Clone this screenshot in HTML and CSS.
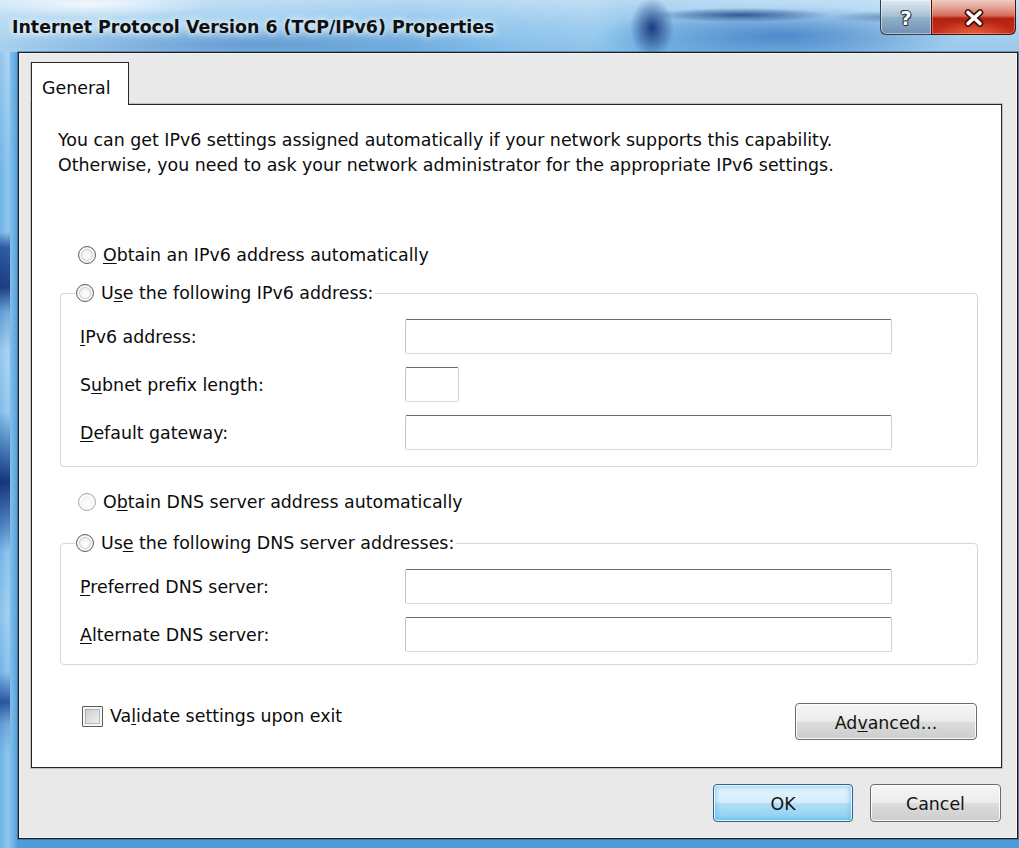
FILE: index.html
```html
<!DOCTYPE html>
<html lang="en">
<head>
<meta charset="utf-8">
<title>Internet Protocol Version 6 (TCP/IPv6) Properties</title>
<link rel="stylesheet" href="styles.css">
</head>
<body>
<div class="window">
  <header class="titlebar">
    <h1 class="title">Internet Protocol Version 6 (TCP/IPv6) Properties</h1>
    <div class="caption">
      <button class="cap-btn help" type="button"><span class="help-glyph">?</span></button>
      <button class="cap-btn close" type="button">
        <svg width="22" height="18" viewBox="0 0 22 18" aria-hidden="true">
          <path d="M5 3.5 L17 14.5 M17 3.5 L5 14.5" stroke="#3a0b06" stroke-width="6.5" stroke-linecap="round" fill="none"/>
          <path d="M5 3.5 L17 14.5 M17 3.5 L5 14.5" stroke="#ffffff" stroke-width="3.6" stroke-linecap="round" fill="none"/>
        </svg>
      </button>
    </div>
  </header>

  <div class="frame">
    <div class="client">
      <div class="tabs">
        <div class="tab">General</div>
      </div>

      <section class="panel">
        <p class="intro">You can get IPv6 settings assigned automatically if your network supports this capability.<br>Otherwise, you need to ask your network administrator for the appropriate IPv6 settings.</p>

        <div class="option lead">
          <span class="radio"></span>
          <span><u>O</u>btain an IPv6 address automatically</span>
        </div>

        <fieldset class="group">
          <legend class="option">
            <span class="radio"></span>
            <span>U<u>s</u>e the following IPv6 address:</span>
          </legend>
          <div class="fields">
            <span class="field-label"><u>I</u>Pv6 address:</span>
            <span class="input"></span>
            <span class="field-label">S<u>u</u>bnet prefix length:</span>
            <span class="input short"></span>
            <span class="field-label"><u>D</u>efault gateway:</span>
            <span class="input"></span>
          </div>
        </fieldset>

        <div class="option dns-auto">
          <span class="radio disabled"></span>
          <span>O<u>b</u>tain DNS server address automatically</span>
        </div>

        <fieldset class="group dns">
          <legend class="option">
            <span class="radio"></span>
            <span>Us<u>e</u> the following DNS server addresses:</span>
          </legend>
          <div class="fields">
            <span class="field-label"><u>P</u>referred DNS server:</span>
            <span class="input"></span>
            <span class="field-label"><u>A</u>lternate DNS server:</span>
            <span class="input"></span>
          </div>
        </fieldset>

        <div class="panel-foot">
          <div class="check">
            <span class="box"></span>
            <span>Va<u>l</u>idate settings upon exit</span>
          </div>
          <button class="btn advanced" type="button">Ad<u>v</u>anced...</button>
        </div>
      </section>

      <div class="dialog-buttons">
        <button class="btn ok default" type="button">OK</button>
        <button class="btn cancel" type="button">Cancel</button>
      </div>
    </div>
  </div>
</div>
</body>
</html>
```

FILE: styles.css
```css
* { box-sizing: border-box; }

html, body {
  margin: 0;
  padding: 0;
}

body {
  width: 1019px;
  height: 848px;
  overflow: hidden;
  font-family: "DejaVu Sans", "DejaVu Sans Condensed", sans-serif;
  font-size: 17.4px;
  letter-spacing: 0;
  color: #0c0c0c;
  background: #6fb2e4;
}

u { text-decoration: underline; text-underline-offset: 2px; text-decoration-thickness: 1px; }

/* ---------- glass window frame ---------- */
.window {
  width: 1019px;
  height: 848px;
  display: flex;
  flex-direction: column;
  background:
    linear-gradient(180deg, #7cbce9 0%, #63ace2 60%, #5aa6e0 100%);
}

.titlebar {
  height: 52px;
  flex: none;
  display: flex;
  align-items: flex-start;
  padding: 0 3px 0 12px;
  background:
    radial-gradient(ellipse 22px 30px at 652px 28px, rgba(10, 40, 110, 0.85), rgba(10, 40, 110, 0) 100%),
    radial-gradient(ellipse 90px 7px at 740px 15px, rgba(20, 55, 120, 0.75), rgba(20, 55, 120, 0) 100%),
    radial-gradient(ellipse 60px 6px at 890px 17px, rgba(40, 80, 140, 0.45), rgba(40, 80, 140, 0) 100%),
    radial-gradient(ellipse 180px 30px at 780px 36px, rgba(30, 95, 180, 0.6), rgba(30, 95, 180, 0) 100%),
    radial-gradient(ellipse 260px 20px at 250px 44px, rgba(50, 110, 180, 0.45), rgba(50, 110, 180, 0) 100%),
    radial-gradient(ellipse 120px 14px at 90px 4px, rgba(255, 255, 255, 0.75), rgba(255, 255, 255, 0) 100%),
    linear-gradient(90deg, rgba(255,255,255,0.35) 0%, rgba(255,255,255,0) 40%, rgba(255,255,255,0.15) 58%, rgba(255,255,255,0) 62%, rgba(255,255,255,0.25) 92%),
    linear-gradient(180deg, #b5d9f3 0%, #92c6ec 45%, #78b7e6 100%);
}

.title {
  margin: 17px 0 0 0;
  font-size: 17.4px;
  font-weight: bold;
  line-height: 20px;
  color: #101010;
  letter-spacing: 0;
  text-shadow: 0 0 6px rgba(255, 255, 255, 0.9), 0 0 10px rgba(255, 255, 255, 0.7);
}

.caption {
  margin-left: auto;
  display: flex;
  height: 35px;
}

.cap-btn {
  margin: 0;
  padding: 0;
  height: 35px;
  border: 1px solid #2d3e52;
  border-top: none;
  display: flex;
  align-items: center;
  justify-content: center;
  font: inherit;
}

.help {
  width: 51px;
  border-right: none;
  border-bottom-left-radius: 6px;
  background:
    linear-gradient(180deg, rgba(255,255,255,0.55) 0%, rgba(255,255,255,0.15) 48%, rgba(255,255,255,0) 52%),
    linear-gradient(180deg, #b5cde0 0%, #93b1cb 50%, #6f91b1 100%);
  box-shadow: inset 0 0 0 1px rgba(255, 255, 255, 0.45);
}

.help-glyph {
  font-family: "DejaVu Sans", sans-serif;
  font-weight: bold;
  font-size: 19px;
  line-height: 1;
  color: #ffffff;
  text-shadow: 1px 0 0 #26364a, -1px 0 0 #26364a, 0 1px 0 #26364a, 0 -1px 0 #26364a, 1px 1px 0 #26364a, -1px -1px 0 #26364a;
  margin-top: 2px;
}

.close {
  width: 85px;
  border-color: #4a1008;
  border-bottom-right-radius: 6px;
  background:
    radial-gradient(ellipse 40px 14px at 50% 100%, rgba(255, 130, 80, 0.6), rgba(255, 130, 80, 0) 100%),
    linear-gradient(180deg, rgba(255,255,255,0.45) 0%, rgba(255,255,255,0.1) 48%, rgba(255,255,255,0) 52%),
    linear-gradient(180deg, #e0a08e 0%, #cf5a44 45%, #b3200f 55%, #c4301a 100%);
  box-shadow: inset 0 0 0 1px rgba(255, 200, 180, 0.4);
}

.close svg { display: block; margin-top: 1px; }

/* side and bottom glass strips */
.frame {
  flex: 1;
  display: flex;
  padding: 0 1px 9px 18px;
  background:
    linear-gradient(180deg,
      rgba(255,255,255,0.25) 0px, rgba(255,255,255,0) 120px,
      rgba(20,60,140,0) 180px, rgba(20,60,140,0.75) 195px, rgba(10,40,110,0.85) 235px, rgba(20,60,140,0.2) 260px,
      rgba(255,255,255,0.25) 300px, rgba(255,255,255,0.1) 360px,
      rgba(20,60,140,0.5) 395px, rgba(10,40,110,0.9) 430px, rgba(20,60,140,0.5) 470px, rgba(20,60,140,0) 500px,
      rgba(255,255,255,0.2) 560px, rgba(255,255,255,0) 620px,
      rgba(20,60,140,0.8) 650px, rgba(20,60,140,0.2) 672px, rgba(255,255,255,0) 700px) 0 0 / 10px 100% no-repeat,
    linear-gradient(90deg, #6fb4e6 0px, #8fc5ed 8px, #6ab0e4 14px, #4f9ad8 18px),
    linear-gradient(180deg, #6ab0e4, #5aa6e0);
  background-color: #60aae2;
}

/* ---------- dialog client area ---------- */
.client {
  flex: 1;
  display: flex;
  flex-direction: column;
  background: #e9e9e9;
  border: 1px solid #1c1c1c;
  box-shadow: inset 0 0 0 1px #f4f4f4, 0 0 0 1px rgba(40, 60, 90, 0.35);
}

.tabs {
  display: flex;
  padding: 9px 0 0 12px;
}

.tab {
  position: relative;
  z-index: 1;
  width: 98px;
  height: 43px;
  margin-bottom: -1px;
  padding: 15px 0 0 10px;
  background: #ffffff;
  border: 1px solid #2a2a2a;
  border-bottom: none;
  box-shadow: -1px 0 0 rgba(0,0,0,0.15);
  line-height: 20px;
}

.panel {
  width: 971px;
  height: 664px;
  margin-left: 12px;
  padding: 23px 0 0 28px;
  background: #ffffff;
  border: 1px solid #262626;
  box-shadow: 0 0 0 1px rgba(0, 0, 0, 0.18);
  display: flex;
  flex-direction: column;
  align-items: flex-start;
}

.intro {
  margin: 0 0 0 -2px;
  line-height: 25px;
  white-space: nowrap;
}

.option {
  display: flex;
  align-items: center;
  gap: 7px;
  height: 24px;
  line-height: 24px;
  white-space: nowrap;
}

.option.lead { margin: 65px 0 0 18px; }
.option.dns-auto { margin: 23px 0 0 18px; }

.radio {
  flex: none;
  width: 18px;
  height: 18px;
  border-radius: 50%;
  border: 1px solid #5e5e5e;
  background: radial-gradient(circle at 55% 60%, #ffffff 0%, #f3f3f3 45%, #d4d4d4 100%);
  box-shadow: inset 0 0 0 2px #f8f8f8, inset 0 0 0 3px rgba(140, 140, 140, 0.35);
}

.radio.disabled {
  border-color: #a9a9a9;
  background: radial-gradient(circle at 55% 60%, #ffffff 0%, #f4f4f4 50%, #e3e3e3 100%);
  box-shadow: inset 0 0 0 2px #fafafa;
}

.group {
  width: 918px;
  margin: 14px 0 0 0;
  padding: 14px 0 16px 14px;
  border: 1px solid #d2d6da;
  border-radius: 4px;
  min-width: 0;
}

.group.dns {
  margin-top: 17px;
  padding-bottom: 12px;
}

.group legend {
  padding: 0 2px 0 1px;
}

.fields {
  display: grid;
  grid-template-columns: 325px 487px;
  grid-auto-rows: 35px;
  row-gap: 13px;
  align-items: center;
  padding-left: 5px;
}

.field-label {
  line-height: 24px;
  white-space: nowrap;
}

.input {
  height: 35px;
  width: 487px;
  background: #ffffff;
  border: 1px solid #d9d9d9;
  border-top-color: #6b6b6b;
  border-left-color: #c4c4c4;
  border-right-color: #d0d0d0;
  border-radius: 2px;
}

.input.short { width: 54px; }

.panel-foot {
  width: 917px;
  margin-top: 38px;
  display: flex;
  justify-content: space-between;
  align-items: flex-start;
}

.check {
  display: flex;
  align-items: center;
  gap: 7px;
  height: 24px;
  margin: 1px 0 0 22px;
  white-space: nowrap;
}

.box {
  width: 21px;
  height: 21px;
  border: 1px solid #5c5c5c;
  background: linear-gradient(135deg, #c7c7c7 0%, #dedede 45%, #f3f3f3 100%);
  box-shadow: inset 0 0 0 2px #f6f6f6, inset 0 0 0 3px rgba(120,120,120,0.4);
  border-radius: 1px;
}

/* ---------- push buttons ---------- */
.btn {
  margin: 0;
  padding: 0;
  font: inherit;
  letter-spacing: inherit;
  color: #141414;
  border: 1px solid #6c6c6c;
  border-radius: 4px;
  background:
    linear-gradient(180deg, #f6f6f6 0%, #ececec 48%, #dcdcdc 52%, #cdcdcd 100%);
  box-shadow: inset 0 0 0 1px rgba(255, 255, 255, 0.85);
  line-height: 20px;
  cursor: default;
}

.advanced {
  width: 182px;
  height: 37px;
  padding-top: 2px;
}

.dialog-buttons {
  display: flex;
  justify-content: flex-end;
  gap: 17px;
  padding: 16px 16px 0 0;
}

.ok, .cancel {
  height: 38px;
  padding-top: 1px;
}

.ok { width: 140px; }
.cancel { width: 131px; }

.btn.default {
  border-color: #2c628b;
  background:
    linear-gradient(180deg, #e6f5fd 0%, #d5eefb 48%, #b0def6 52%, #8ccfef 100%);
  box-shadow: inset 0 0 0 1px rgba(255, 255, 255, 0.8), inset 0 0 5px 2px rgba(70, 175, 230, 0.55);
}
```
